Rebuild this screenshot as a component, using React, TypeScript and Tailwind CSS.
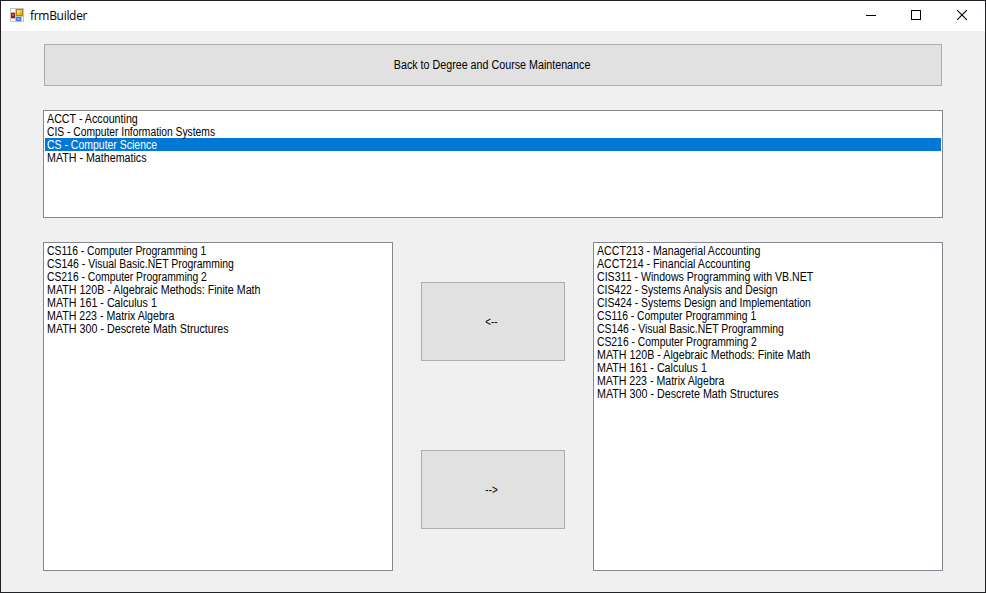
type Item = { text: string; fit: string };

const departments: Item[] = [
  { text: "ACCT - Accounting", fit: "scale-x-[.892]" },
  { text: "CIS - Computer Information Systems", fit: "-ml-[0.5px] scale-x-[.857]" },
  { text: "CS - Computer Science", fit: "-ml-[0.5px] scale-x-[.873]" },
  { text: "MATH - Mathematics", fit: "scale-x-[.89]" },
];

const degreeCourses: Item[] = [
  { text: "CS116 - Computer Programming 1", fit: "-ml-[0.5px] scale-x-[.863]" },
  { text: "CS146 - Visual Basic.NET Programming", fit: "-ml-[0.5px] scale-x-[.869]" },
  { text: "CS216 - Computer Programming 2", fit: "-ml-[0.5px] scale-x-[.862]" },
  { text: "MATH 120B - Algebraic Methods: Finite Math", fit: "scale-x-[.89]" },
  { text: "MATH 161 - Calculus 1", fit: "scale-x-[.892]" },
  { text: "MATH 223 - Matrix Algebra", fit: "scale-x-[.885]" },
  { text: "MATH 300 - Descrete Math Structures", fit: "scale-x-[.894]" },
];

const allCourses: Item[] = [
  { text: "ACCT213 - Managerial Accounting", fit: "scale-x-[.884]" },
  { text: "ACCT214 - Financial Accounting", fit: "scale-x-[.884]" },
  { text: "CIS311 - Windows Programming with VB.NET", fit: "-ml-[0.5px] scale-x-[.882]" },
  { text: "CIS422 - Systems Analysis and Design", fit: "-ml-[0.5px] scale-x-[.868]" },
  { text: "CIS424 - Systems Design and Implementation", fit: "-ml-[0.5px] scale-x-[.869]" },
  ...degreeCourses,
];

function FormIcon() {
  return (
    <svg width="14" height="14" viewBox="0 0 14 14" shapeRendering="crispEdges">
      <defs>
        <linearGradient id="gold" x1="0" y1="0" x2="1" y2="1">
          <stop offset="0" stopColor="#ffeb8a" />
          <stop offset="1" stopColor="#e3a200" />
        </linearGradient>
      </defs>
      <rect width="14" height="14" fill="#c3c3c3" />
      <rect x="1" y="1" width="4" height="3" fill="#fff" />
      <rect x="1" y="11" width="4" height="2" fill="#fff" />
      <rect x="12" y="9" width="1" height="4" fill="#fff" />
      <rect x="6" y="1" width="7" height="7" fill="#b88400" />
      <rect x="7" y="2" width="5" height="5" fill="url(#gold)" />
      <rect x="1" y="5" width="4" height="5" fill="#981b16" />
      <rect x="2" y="6" width="2" height="2" fill="#dc5a4c" />
      <rect x="6" y="9" width="5" height="4" fill="#3b78d8" />
      <rect x="7" y="10" width="3" height="2" fill="#72aaf5" />
    </svg>
  );
}

function TitleBar() {
  return (
    <header className="flex h-[30px] shrink-0 items-start justify-between bg-white">
      <div className="flex items-start pl-[9px] pt-[7px]">
        <FormIcon />
        <h1 className="ml-[6px] whitespace-nowrap font-['Open_Sans',sans-serif] text-[12px] leading-4 tracking-[-0.3px]">
          frmBuilder
        </h1>
      </div>
      <div className="flex gap-[35px] pr-[18px] pt-[9px]">
        <button aria-label="Minimize" className="-ml-px mr-px">
          <svg className="block" width="10" height="10" shapeRendering="crispEdges">
            <path d="M0 5.5H10" stroke="#000" />
          </svg>
        </button>
        <button aria-label="Maximize" className="-ml-px mr-px">
          <svg className="block" width="10" height="10" shapeRendering="crispEdges">
            <rect x=".5" y=".5" width="9" height="9" fill="none" stroke="#000" />
          </svg>
        </button>
        <button aria-label="Close">
          <svg className="block" width="10" height="10">
            <path d="M0 0L10 10M10 0L0 10" stroke="#000" strokeWidth="1.1" />
          </svg>
        </button>
      </div>
    </header>
  );
}

function ListBox({ items, selected, className }: { items: Item[]; selected?: number; className: string }) {
  return (
    <ul className={`border border-[#828790] bg-white p-px ${className}`}>
      {items.map((item, i) => (
        <li
          key={item.text}
          className={`flex h-[13px] whitespace-pre pl-[2px] leading-[15px] ${i === selected ? "bg-[#0078d7] text-white" : ""}`}
        >
          <span className={`origin-left ${item.fit}`}>{item.text}</span>
        </li>
      ))}
    </ul>
  );
}

export default function App() {
  return (
    <div className="flex h-[593px] w-[986px] flex-col border border-[#202124] bg-[#f0f0f0] font-['Liberation_Sans',Arial,sans-serif] text-[12px] text-black">
      <TitleBar />
      <main className="flex flex-col px-[42px] pt-[13px]">
        <button className="mx-px h-[42px] border border-[#adadad] bg-[#e1e1e1] pr-[2px]">
          <span className="inline-block scale-x-[.893]">Back to Degree and Course Maintenance</span>
        </button>
        <ListBox items={departments} selected={2} className="mt-6 h-[108px]" />
        <div className="mt-6 flex h-[329px] justify-between">
          <ListBox items={degreeCourses} className="w-[350px]" />
          <div className="flex w-36 flex-col gap-[89px] pt-10">
            <button className="h-[79px] border border-[#adadad] bg-[#e1e1e1] pr-[3px] pt-px">
              <span className="inline-block scale-x-[.82]">&lt;--</span>
            </button>
            <button className="h-[79px] border border-[#adadad] bg-[#e1e1e1] pr-[3px] pt-px">
              <span className="inline-block scale-x-[.82]">--&gt;</span>
            </button>
          </div>
          <ListBox items={allCourses} className="w-[350px]" />
        </div>
      </main>
    </div>
  );
}
